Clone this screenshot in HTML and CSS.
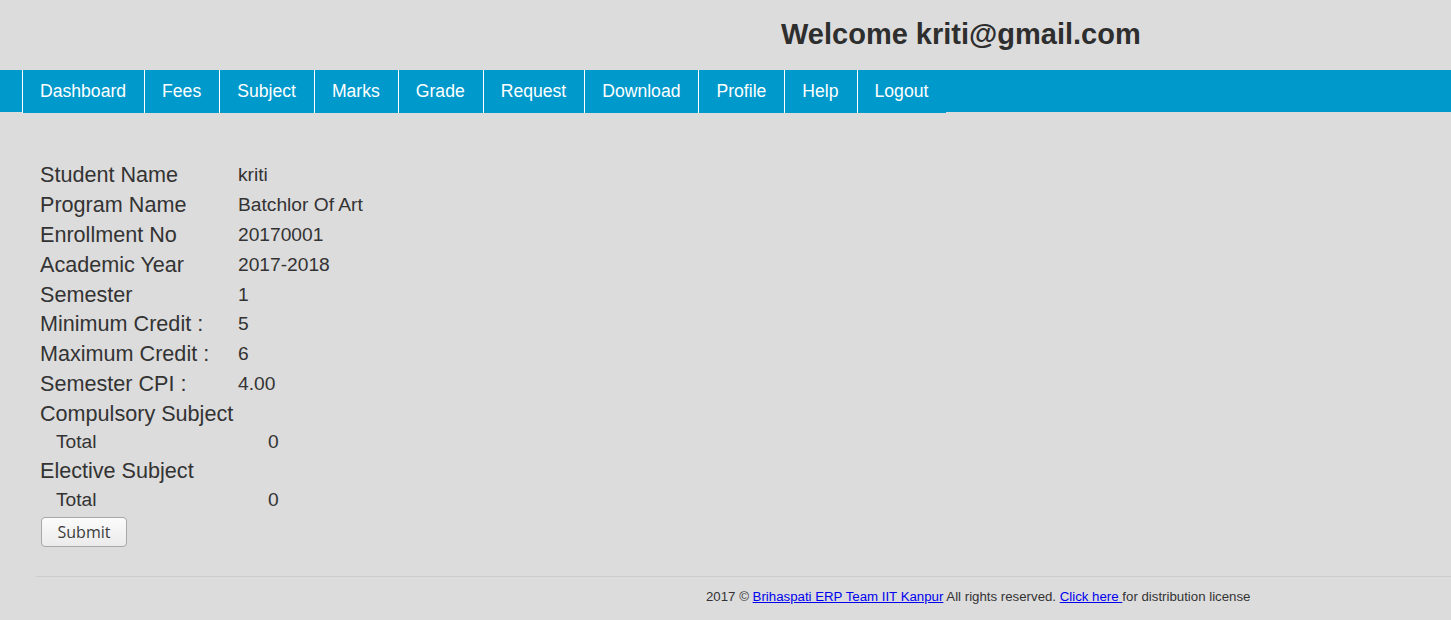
FILE: index.html
```html
<!DOCTYPE html>
<html lang="en">
<head>
<meta charset="utf-8">
<title>Student Dashboard</title>
<link rel="stylesheet" href="styles.css">
</head>
<body>
<header class="top">
  <h1 class="welcome">Welcome kriti@gmail.com</h1>
</header>
<nav class="menu">
  <ul class="menu-list">
    <li class="menu-item"><a class="menu-link" href="#">Dashboard</a></li>
    <li class="menu-item"><a class="menu-link" href="#">Fees</a></li>
    <li class="menu-item"><a class="menu-link" href="#">Subject</a></li>
    <li class="menu-item"><a class="menu-link" href="#">Marks</a></li>
    <li class="menu-item"><a class="menu-link" href="#">Grade</a></li>
    <li class="menu-item"><a class="menu-link" href="#">Request</a></li>
    <li class="menu-item"><a class="menu-link" href="#">Download</a></li>
    <li class="menu-item"><a class="menu-link" href="#">Profile</a></li>
    <li class="menu-item"><a class="menu-link" href="#">Help</a></li>
    <li class="menu-item"><a class="menu-link" href="#">Logout</a></li>
  </ul>
</nav>
<main class="content">
  <div class="info">
    <div class="row"><span class="label">Student Name</span><span class="value">kriti</span></div>
    <div class="row"><span class="label">Program Name</span><span class="value">Batchlor Of Art</span></div>
    <div class="row"><span class="label">Enrollment No</span><span class="value">20170001</span></div>
    <div class="row"><span class="label">Academic Year</span><span class="value">2017-2018</span></div>
    <div class="row"><span class="label">Semester</span><span class="value">1</span></div>
    <div class="row"><span class="label">Minimum Credit :</span><span class="value">5</span></div>
    <div class="row"><span class="label">Maximum Credit :</span><span class="value">6</span></div>
    <div class="row"><span class="label">Semester CPI :</span><span class="value">4.00</span></div>
    <div class="row"><span class="label">Compulsory Subject</span></div>
    <div class="sub-row"><span class="sub-label">Total</span><span class="value">0</span></div>
    <div class="row row-tall"><span class="label">Elective Subject</span></div>
    <div class="sub-row"><span class="sub-label">Total</span><span class="value">0</span></div>
  </div>
  <button class="submit" type="button">Submit</button>
</main>
<footer class="footer">
  <div class="footer-rule"></div>
  <p class="footer-text">2017 &copy; <a class="footer-link" href="#">Brihaspati ERP Team IIT Kanpur</a> All rights reserved. <a class="footer-link" href="#">Click here </a>for distribution license</p>
</footer>
</body>
</html>
```
FILE: styles.css
```css
html, body {
  margin: 0;
  padding: 0;
}
body {
  background: #dcdcdc;
  color: #333;
  font-family: "Liberation Sans", Arial, sans-serif;
  height: 620px;
  overflow: hidden;
}
.top {
  height: 70px;
  padding-left: 781px;
}
.welcome {
  margin: 0;
  font-size: 29px;
  font-weight: bold;
  line-height: 68px;
  color: #2e2e2e;
  white-space: nowrap;
}
.menu {
  height: 42px;
  background: #0099cc;
}
.menu-list {
  list-style: none;
  margin: 0 0 0 22px;
  padding: 0;
  display: flex;
  height: 43px;
}
.menu-item {
  border-left: 1px solid #fff;
  background: #0099cc;
  height: 43px;
}
.menu-link {
  display: block;
  padding: 0 18px 0 17px;
  line-height: 43px;
  font-size: 17.6px;
  color: #fff;
  text-decoration: none;
  white-space: nowrap;
}
.content {
  padding: 48px 0 0 40px;
}
.info {
  display: flex;
  flex-direction: column;
}
.row {
  display: flex;
  align-items: center;
  height: 29.9px;
}
.row-tall {
  height: 31px;
}
.label {
  width: 198px;
  font-size: 21.6px;
  line-height: 30px;
  color: #333;
  white-space: nowrap;
}
.value {
  font-size: 19.2px;
  color: #333;
  white-space: nowrap;
}
.sub-row {
  display: flex;
  align-items: center;
  height: 26.5px;
  padding-left: 16px;
}
.sub-label {
  width: 212px;
  font-size: 19.2px;
  color: #333;
}
.submit {
  margin: 4px 0 0 1px;
  width: 86px;
  height: 30px;
  border: 1px solid #a9a9a9;
  border-radius: 4px;
  background: linear-gradient(#fbfbfb, #ebebeb);
  font-family: "Open Sans", "DejaVu Sans", sans-serif;
  font-size: 16px;
  color: #3c3c3c;
  padding: 0;
  display: block;
}
.footer {
  padding-top: 29px;
}
.footer-rule {
  margin-left: 36px;
  border-top: 1px solid #cdcdcd;
}
.footer-text {
  margin: 12px 0 0 706px;
  font-size: 13.25px;
  line-height: 15px;
  color: #333;
  white-space: nowrap;
}
.footer-link {
  color: #0000ee;
  text-decoration: underline;
}
```
